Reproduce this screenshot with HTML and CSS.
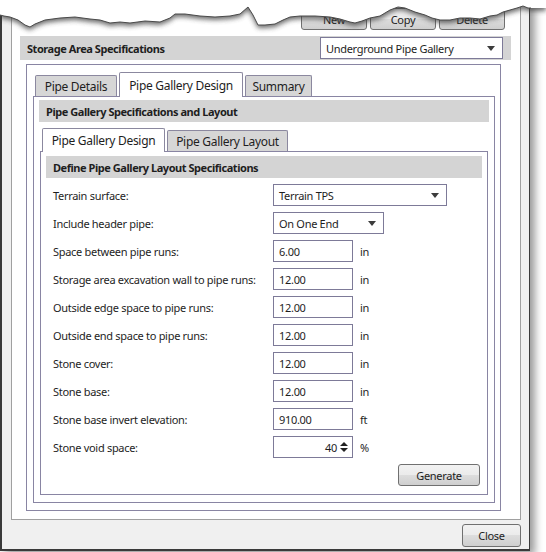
FILE: index.html
```html
<!DOCTYPE html>
<html lang="en">
<head>
  <meta charset="UTF-8">
  <title>Storage Area Specifications</title>
  <link rel="stylesheet" href="styles.css">
</head>
<body>
  <div class="dialog">
    <div class="panel">
      <div class="toolbar">
        <button class="btn tool">New</button>
        <button class="btn tool">Copy</button>
        <button class="btn tool">Delete</button>
      </div>

      <div class="bar section-bar">
        <span>Storage Area Specifications</span>
        <div class="combo storage"><span>Underground Pipe Gallery</span><i class="caret"></i></div>
      </div>

      <div class="group">
        <div class="tabs outer-tabs">
          <div class="tab" style="width: 82px">Pipe Details</div>
          <div class="tab active" style="width: 124px">Pipe Gallery Design</div>
          <div class="tab" style="width: 67px">Summary</div>
        </div>
        <div class="tab-body outer-body">
          <div class="bar">Pipe Gallery Specifications and Layout</div>

          <div class="tabs inner-tabs">
            <div class="tab active" style="width: 123px">Pipe Gallery Design</div>
            <div class="tab" style="width: 121px">Pipe Gallery Layout</div>
          </div>
          <div class="tab-body inner-body">
            <div class="bar">Define Pipe Gallery Layout Specifications</div>

            <div class="form">
              <div class="row">
                <label>Terrain surface:</label>
                <div class="combo terrain"><span>Terrain TPS</span><i class="caret"></i></div>
              </div>
              <div class="row">
                <label>Include header pipe:</label>
                <div class="combo header-pipe"><span>On One End</span><i class="caret"></i></div>
              </div>
              <div class="row">
                <label>Space between pipe runs:</label>
                <div class="field">6.00</div><span class="unit">in</span>
              </div>
              <div class="row">
                <label>Storage area excavation wall to pipe runs:</label>
                <div class="field">12.00</div><span class="unit">in</span>
              </div>
              <div class="row">
                <label>Outside edge space to pipe runs:</label>
                <div class="field">12.00</div><span class="unit">in</span>
              </div>
              <div class="row">
                <label>Outside end space to pipe runs:</label>
                <div class="field">12.00</div><span class="unit">in</span>
              </div>
              <div class="row">
                <label>Stone cover:</label>
                <div class="field">12.00</div><span class="unit">in</span>
              </div>
              <div class="row">
                <label>Stone base:</label>
                <div class="field">12.00</div><span class="unit">in</span>
              </div>
              <div class="row">
                <label>Stone base invert elevation:</label>
                <div class="field">910.00</div><span class="unit">ft</span>
              </div>
              <div class="row">
                <label>Stone void space:</label>
                <div class="field spin"><span>40</span><span class="arrows"><i class="up"></i><i class="down"></i></span></div><span class="unit">%</span>
              </div>
            </div>

            <div class="actions">
              <button class="btn generate">Generate</button>
            </div>
          </div>
        </div>
      </div>
    </div>

    <div class="footer">
      <button class="btn close">Close</button>
    </div>
  </div>

  <!-- ripped paper edge across the top -->
  <svg class="torn" width="546" height="40" viewBox="0 0 546 40">
    <defs>
      <filter id="edge-shadow" x="-5%" y="-50%" width="110%" height="220%">
        <feGaussianBlur stdDeviation="2.8"/>
      </filter>
    </defs>
    <path class="torn-shade" transform="translate(0 3)" filter="url(#edge-shadow)"
      d="M0 0 L0 15 L4 16 L10 17 L18 20 L25 25 L30 27 L35 24 L45 20 L60 18 L75 17 L90 19 L100 20 L110 23 L120 22 L130 23 L145 21 L160 22 L170 18 L175 14 L185 14 L200 16 L215 17 L230 16 L240 14 L248 7 L253 15 L258 25 L265 25 L275 24 L283 20 L290 17 L300 16 L315 16 L330 17 L340 19 L350 22 L355 23 L362 21 L370 18 L380 16 L390 10 L398 7 L405 8 L415 12 L425 15 L432 18 L440 20 L450 20 L460 18 L470 18 L480 19 L490 16 L497 15 L503 12 L510 10 L517 8 L523 6 L528 8 L531 8 L546 8 L546 0 Z"/>
    <path class="torn-paper"
      d="M0 0 L0 15 L4 16 L10 17 L18 20 L25 25 L30 27 L35 24 L45 20 L60 18 L75 17 L90 19 L100 20 L110 23 L120 22 L130 23 L145 21 L160 22 L170 18 L175 14 L185 14 L200 16 L215 17 L230 16 L240 14 L248 7 L253 15 L258 25 L265 25 L275 24 L283 20 L290 17 L300 16 L315 16 L330 17 L340 19 L350 22 L355 23 L362 21 L370 18 L380 16 L390 10 L398 7 L405 8 L415 12 L425 15 L432 18 L440 20 L450 20 L460 18 L470 18 L480 19 L490 16 L497 15 L503 12 L510 10 L517 8 L523 6 L528 8 L531 8 L546 8 L546 0 Z"/>
    <polyline class="torn-line"
      points="0,15 4,16 10,17 18,20 25,25 30,27 35,24 45,20 60,18 75,17 90,19 100,20 110,23 120,22 130,23 145,21 160,22 170,18 175,14 185,14 200,16 215,17 230,16 240,14 248,7 253,15 258,25 265,25 275,24 283,20 290,17 300,16 315,16 330,17 340,19 350,22 355,23 362,21 370,18 380,16 390,10 398,7 405,8 415,12 425,15 432,18 440,20 450,20 460,18 470,18 480,19 490,16 497,15 503,12 510,10 517,8 523,6 528,8 531,8"/>
  </svg>
</body>
</html>
```

FILE: styles.css
```css
body {
  margin: 0;
  width: 546px;
  height: 552px;
  overflow: hidden;
  position: relative;
  background: #fff;
  font-family: "Noto Sans", "Open Sans", sans-serif;
  font-size: 11px;
  letter-spacing: -0.3px;
  color: #1e1e1e;
}

/* window frame */
.dialog {
  box-sizing: border-box;
  width: 530px;
  height: 551px;
  padding-left: 9px;
  background: #f0f0f0;
  border-left: 2px solid #3a3a3a;
  border-right: 1px solid #3a3a3a;
  border-bottom: 2px solid #3a3a3a;
  box-shadow: 5px 4px 8px rgba(0, 0, 0, 0.4);
}
.panel {
  box-sizing: border-box;
  width: 510px;
  height: 520px;
  background: #fff;
  border: 1px solid #a0a0a0;
  display: flex;
  flex-direction: column;
}

/* buttons */
.btn {
  box-sizing: border-box;
  height: 22px;
  padding: 0;
  font: inherit;
  letter-spacing: inherit;
  color: #1e1e1e;
  border: 1px solid #707070;
  border-radius: 3px;
  background: linear-gradient(#f2f2f2, #ebebeb 50%, #dddddd 50%, #cfcfcf);
}
.toolbar {
  display: flex;
  justify-content: flex-end;
  gap: 3px;
  margin: 7px 15px 0 0;
}
.tool {
  width: 66px;
}

/* gray heading strips */
.bar {
  box-sizing: border-box;
  height: 22px;
  padding-left: 7px;
  display: flex;
  align-items: center;
  background: #d4d4d4;
  font-weight: bold;
  letter-spacing: -0.45px;
}
.section-bar {
  height: 24px;
  margin: 6px 9px 0 8px;
  padding-right: 8px;
  justify-content: space-between;
}

/* drop-downs */
.combo {
  box-sizing: border-box;
  height: 22px;
  padding: 0 7px 0 5px;
  display: flex;
  align-items: center;
  justify-content: space-between;
  background: #fff;
  border: 1px solid #7d7a98;
  font-weight: normal;
  letter-spacing: -0.3px;
}
.caret {
  width: 0;
  height: 0;
  border-left: 4px solid transparent;
  border-right: 4px solid transparent;
  border-top: 5px solid #3c3c3c;
}
.storage { width: 183px; }
.terrain { width: 174px; }
.header-pipe { width: 111px; }

/* tab controls */
.group {
  box-sizing: border-box;
  width: 475px;
  height: 447px;
  margin: 4px 0 0 14px;
  border: 1px solid #8985a3;
  display: flex;
  flex-direction: column;
}
.tabs {
  display: flex;
  align-items: flex-end;
  gap: 2px;
}
.outer-tabs {
  height: 31px;
  padding-left: 8px;
}
.inner-tabs {
  height: 29px;
  padding-left: 3px;
}
.tab {
  box-sizing: border-box;
  height: 21px;
  display: flex;
  align-items: center;
  justify-content: center;
  background: #d6d6d6;
  border: 1px solid #8b889f;
  border-bottom: none;
  border-radius: 2px 2px 0 0;
  font-size: 12px;
}
.tab.active {
  position: relative;
  z-index: 1;
  height: 25px;
  margin-bottom: -1px;
  background: #fff;
}
.inner-tabs .tab.active {
  height: 24px;
}
.tab-body {
  box-sizing: border-box;
  background: #fff;
  border: 1px solid #8985a3;
  display: flex;
  flex-direction: column;
}
.outer-body {
  width: 462px;
  height: 407px;
  margin-left: 6px;
  padding: 3px 5px 0;
}
.inner-body {
  width: 448px;
  height: 344px;
  margin-left: 1px;
  padding: 4px 5px 0;
}

/* form rows */
.form {
  display: flex;
  flex-direction: column;
  gap: 6px;
  margin-top: 6px;
  padding-left: 7px;
}
.row {
  display: flex;
  align-items: center;
  height: 22px;
}
.row label {
  width: 220px;
}
.field {
  box-sizing: border-box;
  width: 80px;
  height: 22px;
  padding-left: 5px;
  display: flex;
  align-items: center;
  border: 1px solid #7d7a98;
}
.unit {
  margin-left: 7px;
}
.spin {
  justify-content: flex-end;
  padding-right: 4px;
  gap: 3px;
}
.arrows {
  display: flex;
  flex-direction: column;
  gap: 2px;
}
.arrows i {
  width: 0;
  height: 0;
  border-left: 4px solid transparent;
  border-right: 4px solid transparent;
}
.arrows .up { border-bottom: 4px solid #222; }
.arrows .down { border-top: 4px solid #222; }

.actions {
  display: flex;
  justify-content: flex-end;
  margin: 6px 2px 0 0;
}
.generate {
  width: 82px;
}

.footer {
  display: flex;
  justify-content: flex-end;
  margin: 4px 8px 0 0;
}
.close {
  width: 59px;
  height: 23px;
}

/* ripped top edge */
.torn {
  position: absolute;
  top: 0;
  left: 0;
}
.torn-shade {
  fill: #3a3a3a;
  opacity: 0.75;
}
.torn-paper {
  fill: #fff;
}
.torn-line {
  fill: none;
  stroke: #4a4a4a;
  stroke-width: 1;
}
```
